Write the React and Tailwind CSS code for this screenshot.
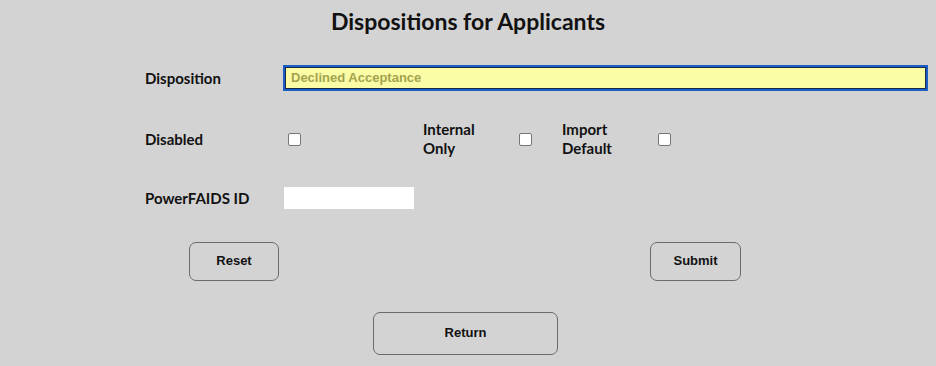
export default function App() {
  const label = "font-['Lato',sans-serif] font-bold text-[15px] text-[#111]";
  const box = "w-[13px] h-[13px] appearance-none bg-white border border-[#767676] rounded-[2px]";
  const btn = "border border-[#6b6b6b] rounded-[7px] bg-[#d3d3d3] font-['Liberation_Sans',Arial,sans-serif] font-bold text-[13px] text-[#111] flex items-center justify-center";
  return (
    <div className="w-[936px] h-[366px] bg-[#d3d3d3] overflow-hidden">
      <h1 className="pt-[7px] text-center font-['Lato',sans-serif] font-bold text-[23px] leading-[28px] text-[#111]">
        Dispositions for Applicants
      </h1>
      <div className="mt-[30px] flex items-center pl-[145px]">
        <div className={`${label} w-[138px]`}>Disposition</div>
        <div className="w-[645px] h-[26px] border-2 border-[#1c5fc4] bg-[#fbfca6] flex items-center pl-[6px] shadow-[inset_0_0_0_1px_#1b2a4a]">
          <span className="font-['Liberation_Sans',Arial,sans-serif] font-bold text-[13px] text-[#a3a34e]">Declined Acceptance</span>
        </div>
      </div>
      <div className="mt-[28px] flex items-center pl-[145px] h-[40px]">
        <div className={`${label} w-[143px]`}>Disabled</div>
        <div className={box}></div>
        <div className={`${label} ml-[122px] w-[96px] leading-[19px]`}>Internal<br />Only</div>
        <div className={box}></div>
        <div className={`${label} ml-[30px] w-[96px] leading-[19px]`}>Import<br />Default</div>
        <div className={box}></div>
      </div>
      <div className="mt-[28px] flex items-center pl-[145px]">
        <div className={`${label} w-[139px]`}>PowerFAIDS ID</div>
        <div className="w-[130px] h-[22px] bg-white"></div>
      </div>
      <div className="mt-[32px] flex pl-[189px]">
        <div className={`${btn} w-[90px] h-[39px]`}>Reset</div>
        <div className={`${btn} w-[91px] h-[39px] ml-[371px]`}>Submit</div>
      </div>
      <div className="mt-[31px] flex pl-[373px]">
        <div className={`${btn} w-[185px] h-[43px]`}>Return</div>
      </div>
    </div>
  );
}
